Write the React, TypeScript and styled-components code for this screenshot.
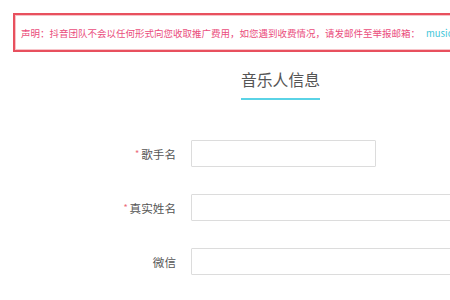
import React from 'react';
import styled, { createGlobalStyle } from 'styled-components';

const GlobalStyle = createGlobalStyle`
	html, body {
		margin: 0;
		padding: 0;
		background: #fff;
		overflow: hidden;
	}
	body {
		font-family: "Noto Sans CJK SC", "Noto Sans", sans-serif;
		color: #555;
	}
`;

const Page = styled.div`
	width: 450px;
	height: 300px;
	overflow: hidden;
	padding-top: 13px;
	box-sizing: border-box;
`;

const Notice = styled.div`
	margin-left: 13px;
	width: 470px;
	height: 39px;
	box-sizing: border-box;
	border: 2px solid #e8505e;
	box-shadow: inset 0 0 0 1px #f7c3c8;
	display: flex;
	align-items: center;
	padding-left: 6px;
	white-space: nowrap;
	font-size: 9.5px;
	color: #ea4d7c;
`;

const Mail = styled.span`
	color: #3fc6d8;
	margin-left: 6px;
`;

const Heading = styled.div`
	margin: 18px 0 0 241px;
	width: 79px;
	display: flex;
	flex-direction: column;
	align-items: center;
`;

const Title = styled.h2`
	margin: 0;
	font-size: 15.8px;
	font-weight: 400;
	line-height: 20px;
	color: #555;
	white-space: nowrap;
`;

const Underline = styled.div`
	margin-top: 8px;
	width: 79px;
	height: 2px;
	background: #5ad3e6;
`;

const Form = styled.div`
	margin-top: 40px;
	display: grid;
	grid-template-columns: 176px auto;
	column-gap: 15px;
	row-gap: 27px;
	grid-auto-rows: 27px;
`;

const Label = styled.label`
	display: flex;
	align-items: center;
	justify-content: flex-end;
	font-size: 11.6px;
	color: #555;
	white-space: nowrap;
`;

const Star = styled.span`
	color: #ec6a78;
	font-size: 9px;
	margin-right: 2px;
`;

const Input = styled.input<{ $wide?: boolean }>`
	width: ${(p) => (p.$wide ? '320px' : '185px')};
	height: 27px;
	box-sizing: border-box;
	border: 1px solid #dcdcdc;
	border-radius: 1px;
	outline: none;
	background: #fff;
	padding: 0 8px;
`;

const fields = [
	{ label: '歌手名', required: true, wide: false },
	{ label: '真实姓名', required: true, wide: true },
	{ label: '微信', required: false, wide: true },
];

const App = (): JSX.Element => {
	return (
		<Page>
			<GlobalStyle />
			<Notice>
				声明：抖音团队不会以任何形式向您收取推广费用，如您遇到收费情况，请发邮件至举报邮箱：
				<Mail>musician@bytedance.com</Mail>
			</Notice>
			<Heading>
				<Title>音乐人信息</Title>
				<Underline />
			</Heading>
			<Form>
				{fields.map((f) => (
					<React.Fragment key={f.label}>
						<Label>
							{f.required && <Star>*</Star>}
							{f.label}
						</Label>
						<Input $wide={f.wide} />
					</React.Fragment>
				))}
			</Form>
		</Page>
	);
};

export default App;
